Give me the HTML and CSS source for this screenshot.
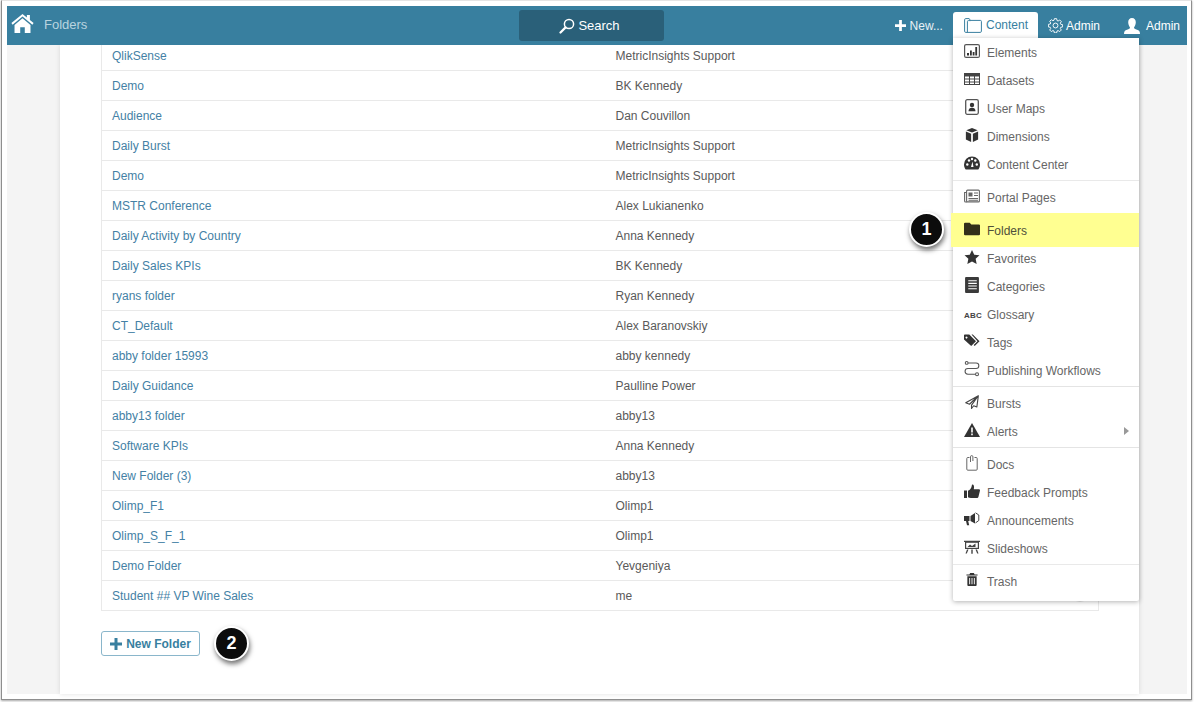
FILE: index.html
```html
<!DOCTYPE html>
<html lang="en">
<head>
<meta charset="utf-8">
<title>Folders</title>
<link rel="stylesheet" href="styles.css">
</head>
<body>
<div class="frame">
  <div class="app">
    <header class="bar">
      <div class="bar-left">
        <svg class="home" viewBox="0 0 24 20"><path d="M12 0 .3 9.6l1.3 1.6L12 2.7l10.4 8.5 1.3-1.6-3.9-3.2V1h-3.2v2.8z"/><path d="M12 4.6 3.6 11.5V20h6v-6h4.8v6h6v-8.500z"/></svg>
        <span class="title">Folders</span>
      </div>
      <div class="search">
        <svg class="search-ic" viewBox="0 0 16 16"><circle cx="10" cy="6" r="4.6" fill="none" stroke="#fff" stroke-width="1.5"/><path d="M6.600 9.400 1.500 14.500" stroke="#fff" stroke-width="2.200" stroke-linecap="round"/></svg>
        <span>Search</span>
      </div>
      <nav class="nav">
        <span class="nav-item nav-new"><svg class="plus" viewBox="0 0 12 12"><path d="M4.500 0h3v4.500h4.500v3H7.500V12h-3V7.500H0v-3h4.500z"/></svg>New...</span>
        <div class="tab">
          <svg class="tab-ic" viewBox="0 0 18 15"><path d="M.6 13.200V1.800q0-1.200 1.200-1.200h3.400l1.200 1.800h10q1 0 1 1v9.800q0 1.200-1.200 1.200H1.800q-1.200 0-1.200-1.200zM3.400 14.400V3.600q0-1 1-1H6.800" fill="none" stroke="#387f9f" stroke-width="1"/></svg>
          <span>Content</span>
          <div class="menu">
            <div class="group group-first">
              <div class="item"><svg class="ic" viewBox="0 0 16 14"><rect x=".6" y=".6" width="14.800" height="12.800" rx="1.500" fill="none" stroke="#555" stroke-width="1.200"/><path d="M3 9h2v2.500H3zM6 6.500h1.800v5H6zM8.700 8h1.800v3.500H8.700zM11.300 3h1.800v8.500h-1.800z" fill="#333"/></svg><span>Elements</span></div>
              <div class="item"><svg class="ic" viewBox="0 0 16 12"><path d="M0 0h16v12H0z" fill="#444"/><path d="M1 3.500h4v2H1zM6 3.500h4v2H6zM11 3.500h4v2h-4zM1 6.500h4v2H1zM6 6.500h4v2H6zM11 6.500h4v2h-4zM1 9.500h4V11H1zM6 9.500h4V11H6zM11 9.500h4V11h-4z" fill="#fff"/></svg><span>Datasets</span></div>
              <div class="item"><svg class="ic ic-tall" viewBox="0 0 14 16"><rect x=".7" y=".7" width="12.600" height="14.600" rx="1.500" fill="none" stroke="#555" stroke-width="1.300"/><circle cx="7" cy="6" r="2.200" fill="#333"/><path d="M3.500 12.200c0-2.400 1.400-3.500 3.500-3.500s3.500 1.100 3.500 3.500z" fill="#333"/></svg><span>User Maps</span></div>
              <div class="item"><svg class="ic" viewBox="0 0 16 16"><path d="M8 0 14.500 2.600 8 5.200 1.500 2.600zM1 4l6 2.500V16l-6-3zM15 4 9 6.500V16l6-3z" fill="#333"/></svg><span>Dimensions</span></div>
              <div class="item"><svg class="ic" viewBox="0 0 16 14"><path d="M8 .5a8 8 0 0 0-8 8c0 2 .7 3.700 1.700 5h12.600c1-1.300 1.700-3 1.700-5a8 8 0 0 0-8-8z" fill="#333"/><circle cx="3.300" cy="8.500" r="1.200" fill="#fff"/><circle cx="5" cy="4.500" r="1.200" fill="#fff"/><circle cx="8" cy="3" r="1.200" fill="#fff"/><circle cx="11.300" cy="4.500" r="1.200" fill="#fff"/><circle cx="12.800" cy="8.500" r="1.200" fill="#fff"/><path d="m7 11 1.500-5.500L9.500 11z" fill="#fff"/></svg><span>Content Center</span></div>
            </div>
            <div class="group">
              <div class="item"><svg class="ic" viewBox="0 0 16 13"><rect x="2.600" y=".6" width="12.800" height="11.800" rx="1" fill="none" stroke="#666" stroke-width="1.100"/><path d="M2.600 3H.6v8.500q0 1 1 1h1.500" fill="none" stroke="#666" stroke-width="1.100"/><path d="M4.500 3h4v4h-4zM10 3h4v1h-4zM10 5.500h4v1h-4zM4.500 8.500H14v1H4.500zM4.500 10.300H14v1H4.500z" fill="#666"/></svg><span>Portal Pages</span></div>
            </div>
            <div class="group group-hl">
              <div class="item item-hl"><svg class="ic" viewBox="0 0 14 11"><path d="M1 0h4l1.400 1.500H13q1 0 1 1V10q0 1-1 1H1q-1 0-1-1V1q0-1 1-1z" fill="#332f1a"/></svg><span>Folders</span></div>
              <div class="item"><svg class="ic" viewBox="0 0 16 15"><path d="m8 0 2.400 5 5.600.7-4.100 3.800L13 15 8 12.300 3 15l1.100-5.500L0 5.700 5.600 5z" fill="#333"/></svg><span>Favorites</span></div>
              <div class="item"><svg class="ic ic-tall" viewBox="0 0 13 15"><rect width="13" height="15" rx="1" fill="#3a3a3a"/><path d="M3 3h8v1H3zM3 5.500h8v1H3zM3 8h8v1H3zM3 10.500h8v1H3z" fill="#fff"/></svg><span>Categories</span></div>
              <div class="item"><span class="abc">ABC</span><span>Glossary</span></div>
              <div class="item"><svg class="ic" viewBox="0 0 16 13"><path d="M0 .8Q0 0 .8 0h4.500l6.700 6.700-4.800 4.800L0 5zM2.500 2a1 1 0 1 0 .01 0z" fill="#333" fill-rule="evenodd"/><path d="M7.500 0h1.300L15.500 6.700 10.700 11.500l-1-1 3.800-3.800z" fill="#333"/></svg><span>Tags</span></div>
              <div class="item"><svg class="ic ic-tall" viewBox="0 0 14 15"><circle cx="2" cy="1.800" r="1.300" fill="none" stroke="#555"/><path d="M3.300 1.800h7.500a2.200 2.200 0 0 1 0 5.200H3.200a2.200 2.200 0 0 0 0 5.400H10" fill="none" stroke="#555"/><circle cx="11.700" cy="12.400" r="1.400" fill="none" stroke="#555"/></svg><span>Publishing Workflows</span></div>
            </div>
            <div class="group group-thick">
              <div class="item"><svg class="ic" viewBox="0 0 15 15"><path d="M14.300.8 .8 8.200l4 1.700 9.500-9.100-7.300 10V14.500l2.300-3 3.400 1.400z" fill="none" stroke="#444" stroke-width="1.200" stroke-linejoin="round"/></svg><span>Bursts</span></div>
              <div class="item"><svg class="ic" viewBox="0 0 16 14"><path d="M8 0 16 14H0z" fill="#333"/><path d="M7.200 4.500h1.600v5H7.200zM7.200 10.500h1.600v1.800H7.200z" fill="#fff"/></svg><span>Alerts</span><i class="caret"></i></div>
            </div>
            <div class="group group-thick">
              <div class="item"><svg class="ic ic-tall" viewBox="0 0 12 16"><path d="M3.500 2.500H1.800q-1 0-1 1v10.700q0 1 1 1h8.400q1 0 1-1V3.500q0-1-1-1H8.500" fill="none" stroke="#666"/><path d="M4.500 7V1.800a1.200 1.200 0 0 1 2.400 0V6" fill="none" stroke="#666"/></svg><span>Docs</span></div>
              <div class="item"><svg class="ic" viewBox="0 0 16 14"><path d="M0 6.500h3V14H0z" fill="#333"/><path d="M4 6.500c2 0 3.500-2.500 4-6 1.800-.2 2.500 1.500 1.800 4.800H15q1 0 1 1.200l-1.600 6.500q-.3 1-1.200 1H7q-2 0-3-.8z" fill="#333"/></svg><span>Feedback Prompts</span></div>
              <div class="item"><svg class="ic" viewBox="0 0 16 14"><path d="M0 4h5.500v5H4.200l1 4.300H3L2 9H0z" fill="#333"/><path d="M6.500 4 11 1v10.500L6.500 9z" fill="#333"/><path d="M11.500.8 14.800 3v5.500l-3.300 2.400" fill="none" stroke="#444"/></svg><span>Announcements</span></div>
              <div class="item"><svg class="ic" viewBox="0 0 16 14"><path d="M0 .8h16V2H15v7H1V2H0z" fill="#444"/><path d="M2.200 2.800h11.600v5H2.200z" fill="#fff"/><path d="m3.500 7 2.500-2.500 2 1.500 3.500-2.500v3.500z" fill="#444"/><path d="M3 9.500 1.500 13.500h1.300L4.500 9.500zM7.300 9.500h1.400v4.300H7.300zM13 9.500l1.500 4h-1.300L11.500 9.500z" fill="#444"/></svg><span>Slideshows</span></div>
            </div>
            <div class="group group-last">
              <div class="item"><svg class="ic ic-small" viewBox="0 0 12 14"><path d="M4 0h4l.8 1.500H12v1.300H0V1.500h3.200z" fill="#333"/><path d="M1 3.500h10V13q0 1-1 1H2q-1 0-1-1zM3 5.500v6.500h1V5.500zM5.500 5.500v6.500h1V5.500zM8 5.500v6.500h1V5.500z" fill="#333" fill-rule="evenodd"/></svg><span>Trash</span></div>
            </div>
          </div>
        </div>
        <span class="nav-item nav-admin"><svg class="gear" viewBox="0 0 16 16"><path d="M6.800.7h2.400l.4 2 1.200.5 1.700-1.100 1.700 1.700-1.100 1.700.5 1.200 2 .4v2.400l-2 .4-.5 1.200 1.100 1.700-1.700 1.700-1.700-1.100-1.200.5-.4 2H6.800l-.4-2-1.200-.5-1.700 1.100-1.700-1.700 1.100-1.700-.5-1.200-2-.4V6.800l2-.4.5-1.200-1.100-1.700 1.700-1.700 1.700 1.100 1.200-.5z" fill="none" stroke="#fff" stroke-width="1"/><circle cx="8" cy="8" r="2.600" fill="none" stroke="#fff"/></svg>Admin</span>
        <span class="nav-item nav-user"><svg class="user" viewBox="0 0 16 16"><path d="M8 0c2.400 0 3.800 1.700 3.800 4.200S10.500 8.800 10 9.600c0 1.200 1 1.500 3 2.200 2 .7 3 1.400 3 4.200H0c0-2.800 1-3.500 3-4.200 2-.7 3-1 3-2.200-.5-.8-1.800-2.900-1.800-5.400S5.600 0 8 0z"/></svg>Admin</span>
      </nav>
    </header>
    <main class="main">
      <div class="content">
        <div class="table">
          <div class="row"><a class="name">QlikSense</a><span class="owner">MetricInsights Support</span></div>
          <div class="row"><a class="name">Demo</a><span class="owner">BK Kennedy</span></div>
          <div class="row"><a class="name">Audience</a><span class="owner">Dan Couvillon</span></div>
          <div class="row"><a class="name">Daily Burst</a><span class="owner">MetricInsights Support</span></div>
          <div class="row"><a class="name">Demo</a><span class="owner">MetricInsights Support</span></div>
          <div class="row"><a class="name">MSTR Conference</a><span class="owner">Alex Lukianenko</span></div>
          <div class="row"><a class="name">Daily Activity by Country</a><span class="owner">Anna Kennedy</span></div>
          <div class="row"><a class="name">Daily Sales KPIs</a><span class="owner">BK Kennedy</span></div>
          <div class="row"><a class="name">ryans folder</a><span class="owner">Ryan Kennedy</span></div>
          <div class="row"><a class="name">CT_Default</a><span class="owner">Alex Baranovskiy</span></div>
          <div class="row"><a class="name">abby folder 15993</a><span class="owner">abby kennedy</span></div>
          <div class="row"><a class="name">Daily Guidance</a><span class="owner">Paulline Power</span></div>
          <div class="row"><a class="name">abby13 folder</a><span class="owner">abby13</span></div>
          <div class="row"><a class="name">Software KPIs</a><span class="owner">Anna Kennedy</span></div>
          <div class="row"><a class="name">New Folder (3)</a><span class="owner">abby13</span></div>
          <div class="row"><a class="name">Olimp_F1</a><span class="owner">Olimp1</span></div>
          <div class="row"><a class="name">Olimp_S_F_1</a><span class="owner">Olimp1</span></div>
          <div class="row"><a class="name">Demo Folder</a><span class="owner">Yevgeniya</span></div>
          <div class="row"><a class="name">Student ## VP Wine Sales</a><span class="owner">me</span><i class="row-action"></i></div>
        </div>
        <div class="actions">
          <button class="new-folder"><svg class="btn-plus" viewBox="0 0 12 12"><path d="M4.500 0h3v4.500H12v3H7.500V12h-3V7.500H0v-3h4.500z"/></svg>New Folder</button>
          <span class="badge badge-two">2</span>
        </div>
      </div>
    </main>
  </div>
  <span class="badge badge-one">1</span>
</div>
</body>
</html>
```
FILE: styles.css
```css
* { box-sizing: border-box; }
html, body { margin: 0; padding: 0; background: #fff; }
body { font-family: "Liberation Sans", Arial, sans-serif; font-size: 12px; overflow: hidden; height: 702px; }

.frame {
  position: relative;
  margin-left: 1px;
  width: 1191px;
  height: 700px;
  padding: 5px 4px 5px 5px;
  background: #fff;
  border: 1px solid #8e8e8e;
  border-top-color: #e4e4e4;
  box-shadow: 0 1px 2px rgba(0,0,0,.35);
}
.app { width: 1180px; height: 688px; background: #f4f4f4; display: flex; flex-direction: column; }

.bar { height: 39px; flex: none; background: #387f9f; display: flex; align-items: center; color: #fff; position: relative; z-index: 5; }
.bar-left { width: 512px; display: flex; align-items: center; padding-left: 4px; }
.home { width: 23px; height: 19px; fill: #fff; margin-top: -4px; }
.title { margin-left: 10px; font-size: 13px; color: #b9d4df; margin-top: -2px; }
.search { width: 145px; height: 31px; background: #2a6079; border-radius: 3px; display: flex; align-items: center; justify-content: center; gap: 3px; font-size: 13px; padding-right: 4px; }
.search-ic { width: 16px; height: 16px; }

.nav { margin-left: auto; display: flex; align-items: center; height: 100%; font-size: 12px; }
.nav-item { display: flex; align-items: center; }
.nav-new { margin-right: 10px; color: #e9f1f5; }
.plus { width: 11px; height: 11px; fill: #fff; margin-right: 4px; }
.tab { position: relative; align-self: flex-start; margin-top: 6px; width: 85px; height: 26px; background: #fff; border-radius: 3px 3px 0 0; display: flex; align-items: center; padding-left: 11px; gap: 4px; color: #387f9f; }
.tab-ic { width: 18px; height: 15px; }
.nav-admin { margin-left: 10px; }
.gear { width: 15px; height: 15px; margin-right: 3px; }
.nav-user { margin-left: 24px; margin-right: 7px; }
.user { width: 16px; height: 16px; fill: #fff; margin-right: 6px; }

.menu { position: absolute; left: 0; top: 26px; width: 186px; background: #fff; color: #666; box-shadow: 0 1px 5px rgba(0,0,0,.3); border-radius: 0 0 2px 2px; z-index: 10; }
.group { border-top: 1px solid #e9e9e9; padding: 2px 0; }
.group-first { border-top: 0; padding-top: 0; }
.group-thick { border-top: 1px solid #e4e4e4; }
.group-hl { border-top-color: #fff; }
.group-last { padding-bottom: 6px; }
.item { position: relative; height: 28px; display: flex; align-items: center; padding: 2px 0 0 11px; }
.item > span:not(.abc) { position: relative; }
.ic { width: 16px; height: 14px; flex: none; margin-right: 7px; margin-top: -5px; }
.ic-tall { height: 16px; }
.ic-small { height: 13px; }
.abc { width: 16px; margin-right: 7px; font-size: 8px; font-weight: 700; color: #444; flex: none; white-space: nowrap; letter-spacing: .2px; }
.caret { position: absolute; right: 10px; top: 10px; border-left: 5px solid #999; border-top: 4px solid transparent; border-bottom: 4px solid transparent; }
.item-hl .ic { position: relative; }
.item-hl::before { content: ""; position: absolute; left: -2px; right: 0; top: -3px; bottom: -3px; background: #ffff91; }
.item-hl { color: #4f4f3a; }

.main { flex: 1; min-height: 0; margin: 0 48px 0 53px; background: #fff; box-shadow: 0 0 5px rgba(0,0,0,.12); overflow: hidden; }
.content { padding: 0 40px 0 41px; margin-top: -4px; }
.table { border: 1px solid #e9e9e9; border-top: 0; }
.row { position: relative; height: 30px; display: flex; align-items: center; padding-left: 10px; border-bottom: 1px solid #e9e9e9; }
.row:last-child { border-bottom: 0; height: 29px; }
.name { width: 503.500px; color: #4481a5; flex: none; }
.owner { color: #5a5a5a; }
.row-action { position: absolute; right: 8px; top: 0; width: 20px; height: 21px; background: #e5e5e5; border-radius: 50%; }

.actions { display: flex; align-items: center; margin-top: 15px; position: relative; }
.new-folder { width: 99px; height: 25px; background: #fff; border: 1px solid #8ab6cb; border-radius: 3px; color: #387f9f; font: 700 12px "Liberation Sans", Arial, sans-serif; display: flex; align-items: center; justify-content: center; padding: 0; }
.btn-plus { width: 12px; height: 12px; fill: #387f9f; margin-right: 4px; }

.badge { width: 35px; height: 35px; border-radius: 50%; background: #0c0c0c; border: 2px solid #fff; color: #fff; font: 700 18px "Liberation Sans", Arial, sans-serif; display: flex; align-items: center; justify-content: center; box-shadow: 1px 3px 5px rgba(0,0,0,.55); }
.badge-one { position: absolute; left: 907px; top: 211px; z-index: 20; }
.badge-two { margin-left: 14px; }
```
